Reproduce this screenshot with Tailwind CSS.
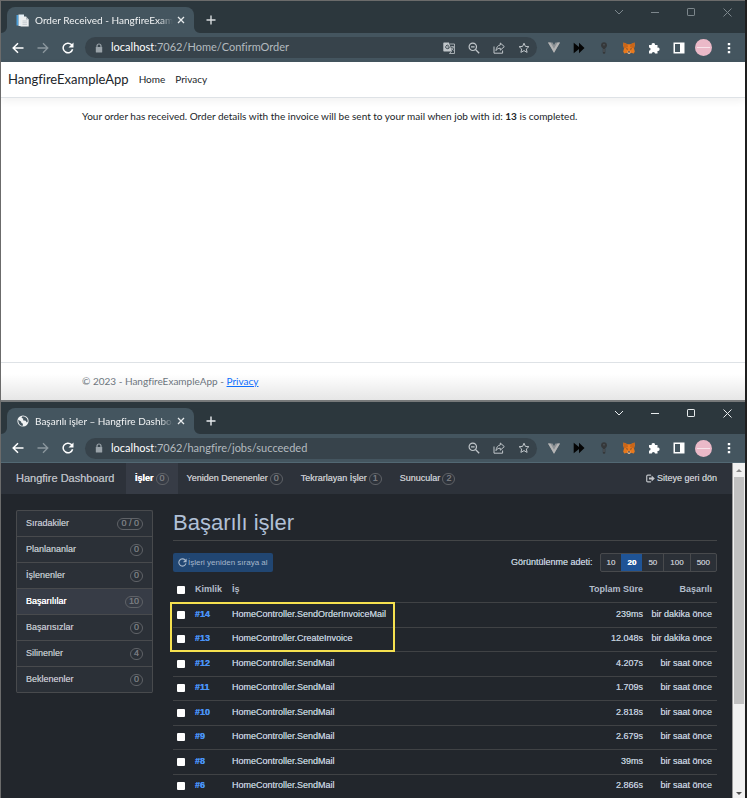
<!DOCTYPE html>
<html lang="tr">
<head>
<meta charset="utf-8">
<meta name="viewport" content="width=device-width, initial-scale=1">
<title>Hangfire Example</title>
<script src="https://cdn.jsdelivr.net/npm/@tailwindcss/browser@4"></script>
</head>
<body class="bg-[#1f1f1f]">

<svg class="hidden" aria-hidden="true">
  <symbol id="i-back" viewBox="0 0 12 12"><path d="M11.5 6H1.2M6 1.2 1.2 6 6 10.8" fill="none" stroke="currentColor" stroke-width="1.5"/></symbol>
  <symbol id="i-forward" viewBox="0 0 12 12"><path d="M.5 6h10.3M6 1.2 10.8 6 6 10.8" fill="none" stroke="currentColor" stroke-width="1.3"/></symbol>
  <symbol id="i-reload" viewBox="0 0 12 12"><path d="M10.6 7.2A4.8 4.8 0 1 1 9.4 2.6L10.6 4" fill="none" stroke="currentColor" stroke-width="1.5"/><path d="M11.5.5v5h-5z" fill="currentColor"/></symbol>
  <symbol id="i-lock" viewBox="0 0 8 10"><path d="M2 4.5V3a2 2 0 0 1 4 0v1.500" fill="none" stroke="currentColor" stroke-width="1.200"/><rect x=".8" y="4" width="6.400" height="5.500" rx=".6" fill="currentColor"/></symbol>
  <symbol id="i-translate" viewBox="0 0 12 12"><path d="M1 .5h5l3 9H1a.7.7 0 0 1-.7-.7V1.200A.7.7 0 0 1 1 .5z" fill="currentColor"/><path d="M6.300 4.800A1.800 1.800 0 1 1 5.600 3.500M4.500 4.900h1.800" fill="none" stroke="#37434b" stroke-width=".9"/><path d="M7 2h4.500v9.500H6.500L8.300 9.500M7.800 4.800h3.200M9.300 4v.8M10.500 4.800Q10 7 8.300 8.300M8.400 6q.7 1.600 2.300 2.400" fill="none" stroke="currentColor" stroke-width=".8"/></symbol>
  <symbol id="i-zoom" viewBox="0 0 12 12"><circle cx="4.800" cy="4.800" r="3.700" fill="none" stroke="currentColor" stroke-width="1.200"/><path d="M3 4.800h3.600M7.500 7.500l3.700 3.700" stroke="currentColor" stroke-width="1.300"/></symbol>
  <symbol id="i-share" viewBox="0 0 12 12"><path d="M1 4.500v6.700h8.600V8.500M7.300 1l4 3.600-4 3.600V6.200C5.200 6.200 4 7 3 8.600 3.300 5.500 4.800 3.300 7.300 3z" fill="none" stroke="currentColor" stroke-width="1"/></symbol>
  <symbol id="i-star" viewBox="0 0 12 12"><path d="M6 1.200l1.400 3.200 3.500.3-2.600 2.300.8 3.400L6 8.600l-3.100 1.800.8-3.400L1.100 4.700l3.500-.3z" fill="none" stroke="currentColor" stroke-width="1"/></symbol>
  <symbol id="i-vue" viewBox="0 0 12 11"><path d="M0 .5h4.500L6 3 7.500.5H12L6 10.800z" fill="#8d9296"/><path d="M0 .5h2.400L6 6.700 9.600.5H12L6 10.800z" fill="#b5b5b5"/></symbol>
  <symbol id="i-ff" viewBox="0 0 12 12"><path d="M.7.8 6 5v-4.200L11.500 6 6 11.200V7L.7 11.200z" fill="#050505"/></symbol>
  <symbol id="i-key" viewBox="0 0 8 12"><circle cx="4" cy="3.200" r="2.900" fill="#35383a"/><rect x="2.800" y="5.500" width="2.500" height="6.300" rx="1" fill="#35383a"/><path d="M4 2v1.500M4 7v3" stroke="#606b72" stroke-width=".8"/></symbol>
  <symbol id="i-fox" viewBox="0 0 12 12"><path d="M.5.5 4.500 2.300h3L11.500.5 11.800 3.500 11 6.500l.8 3-1 2-3-.7-.8.900H5l-.8-.9-3 .7-1-2 .8-3L.2 3.500z" fill="#e8791d"/><path d="M.5.5l4 1.800L5 5 1 6.500zM11.500.5l-4 1.800L7 5l4 1.500z" fill="#c96518"/><path d="M3 6.500l1.800.3-.6.900zM9 6.500l-1.800.3.6.9z" fill="#25313b"/><path d="M4.400 9.500h3.200L7 11.700H5z" fill="#d5c3b2"/><path d="M5 9.500h2l-.3 1H5.300z" fill="#20242a"/></symbol>
  <symbol id="i-puzzle" viewBox="0 0 12 12"><path d="M1 3h2.700a1.700 1.700 0 1 1 3.300 0H9.500v2.700a1.700 1.700 0 1 1 0 3.300v2.500H7a1.600 1.600 0 0 0-3.200 0H1V8.700a1.600 1.600 0 0 0 0-3.200z" fill="#fff"/></symbol>
  <symbol id="i-panel" viewBox="0 0 12 12"><path d="M.5.500h11v11H.5zM2 2v8h5V2z" fill="#fff" fill-rule="evenodd"/></symbol>
  <symbol id="i-dots" viewBox="0 0 4 12"><path d="M.8 1h2.400v2.200H.8zM.8 5h2.400v2.200H.8zM.8 9h2.400v2.200H.8z" fill="#fff"/></symbol>
  <symbol id="i-x" viewBox="0 0 8 8"><path d="M1 1l6 6M7 1 1 7" stroke="currentColor" stroke-width="1.300"/></symbol>
  <symbol id="i-plus" viewBox="0 0 10 10"><path d="M5 .5v9M.5 5h9" stroke="currentColor" stroke-width="1.400"/></symbol>
  <symbol id="i-chevron" viewBox="0 0 10 10"><path d="M1 3l4 4 4-4" fill="none" stroke="currentColor"/></symbol>
  <symbol id="i-min" viewBox="0 0 8 8"><path d="M0 4.500h8" stroke="currentColor"/></symbol>
  <symbol id="i-max" viewBox="0 0 8 8"><rect x=".5" y=".5" width="7" height="7" rx=".6" fill="none" stroke="currentColor"/></symbol>
  <symbol id="i-close" viewBox="0 0 9 9"><path d="M.5.5l8 8M8.500.5l-8 8" stroke="currentColor"/></symbol>
  <symbol id="i-foot" viewBox="0 0 6 6"><path d="M0 0a6 6 0 0 0 6 6H0z" fill="#44555f"/></symbol>
  <symbol id="i-page" viewBox="0 0 13 13"><path d="M.5 1h2v10.500h-2z" fill="#4a9fdb"/><path d="M2.500.5h5.500v11.500h-5.500z" fill="#e3eef5"/><path d="M4.500 2.500h5.500l2.700 3V12.500H4.500z" fill="#eceeef"/><path d="M10 2.500v3h2.700z" fill="#aab4ba"/><path d="M6.500 7h4.500M6.500 8.700h4.500M6.500 10.400h4.500" stroke="#b8c0c5" stroke-width=".7"/></symbol>
  <symbol id="i-globe" viewBox="0 0 12 12"><circle cx="6" cy="6" r="5.600" fill="#f1f3f4"/><path d="M1.200 4.800 4 6.500l.5 1.500 1.500.8-.4 2.200C3 10.700 1.200 8.700 1.200 4.800zM5.500 1.200 4.500 2.800l1.800 1L6 5.200l2.700.5 1 1.800 1-.8C11 4 9.300 1.500 5.500 1.200z" fill="#44555f"/></symbol>
  <symbol id="i-exit" viewBox="0 0 10 10"><path d="M5.500 1.200H2A1.200 1.200 0 0 0 .8 2.400v5.200A1.200 1.200 0 0 0 2 8.800h3.500" fill="none" stroke="currentColor" stroke-width="1.300"/><path d="M3.300 3.800h3V1.800L9.800 5 6.300 8.200v-2h-3z" fill="currentColor"/></symbol>
</svg>

<div class="grid h-screen grid-rows-[400fr_398fr] overflow-hidden border-l border-[#6b6b6b] pr-[2px]">

  <!-- Order confirmation window -->
  <section class="flex min-h-0 flex-col border-t border-[#6b6b6b] bg-white font-[Lato,sans-serif]">
    <div class="flex h-8 shrink-0 items-end bg-[#2c373d] pl-[6px] text-[#7d878d]">
      <div class="relative flex h-[26px] w-[187px] items-center rounded-t-lg bg-[#44555f] pr-[9px] pl-[9px]">
        <svg class="size-[13px] shrink-0"><use href="#i-page"/></svg>
        <span class="ml-[6px] flex-1 overflow-hidden mask-r-from-90% text-[10px] whitespace-nowrap text-[#f1f3f4]">Order Received - HangfireExampleApp</span>
        <button aria-label="Sekmeyi kapat" class="ml-1 text-[#e8ecee]"><svg class="size-2"><use href="#i-x"/></svg></button>
        <svg class="absolute bottom-0 left-full size-[6px]"><use href="#i-foot"/></svg>
        <svg class="absolute right-full bottom-0 size-[6px] -scale-x-100"><use href="#i-foot"/></svg>
      </div>
      <button aria-label="Yeni sekme" class="mb-2 ml-3 text-[#d8dcde]"><svg class="size-[10px]"><use href="#i-plus"/></svg></button>
      <div class="ml-auto flex self-start">
        <button aria-label="Sekme ara" class="flex h-[22px] w-9 items-center justify-center"><svg class="size-[10px]"><use href="#i-chevron"/></svg></button>
        <button aria-label="Küçült" class="flex h-[22px] w-9 items-center justify-center"><svg class="size-2"><use href="#i-min"/></svg></button>
        <button aria-label="Ekranı kapla" class="flex h-[22px] w-9 items-center justify-center"><svg class="size-2"><use href="#i-max"/></svg></button>
        <button aria-label="Kapat" class="flex h-[22px] w-9 items-center justify-center"><svg class="size-[9px]"><use href="#i-close"/></svg></button>
      </div>
    </div>
    <div class="flex h-[29px] shrink-0 items-center bg-[#44555f] px-1 text-white">
      <button aria-label="Geri" class="flex w-[25px] justify-center"><svg class="size-3"><use href="#i-back"/></svg></button>
      <button aria-label="İleri" class="flex w-[25px] justify-center text-[#8b979e]"><svg class="size-3"><use href="#i-forward"/></svg></button>
      <button aria-label="Yenile" class="flex w-[25px] justify-center"><svg class="size-3"><use href="#i-reload"/></svg></button>
      <div class="mr-1 ml-[5px] flex h-[21px] flex-1 items-center rounded-full bg-[#37434b] pl-[10px] text-[#c0c6ca]">
        <svg class="h-[10px] w-2 text-[#9aa3a9]"><use href="#i-lock"/></svg>
        <span class="ml-2 flex-1 text-[11px] text-[#b3babf]"><span class="text-white">localhost</span>:7062/Home/ConfirmOrder</span>
        <button aria-label="Çevir" class="flex w-[25px] justify-center"><svg class="size-3"><use href="#i-translate"/></svg></button>
        <button aria-label="Yakınlaştırma" class="flex w-[25px] justify-center"><svg class="size-3"><use href="#i-zoom"/></svg></button>
        <button aria-label="Paylaş" class="flex w-[25px] justify-center"><svg class="size-3"><use href="#i-share"/></svg></button>
        <button aria-label="Yer işareti" class="mr-px flex w-[25px] justify-center"><svg class="size-3"><use href="#i-star"/></svg></button>
      </div>
      <button aria-label="Vue" class="flex w-[25px] justify-center"><svg class="h-[11px] w-3"><use href="#i-vue"/></svg></button>
      <button aria-label="İleri sar" class="flex w-[25px] justify-center"><svg class="size-3"><use href="#i-ff"/></svg></button>
      <button aria-label="Anahtar" class="flex w-[25px] justify-center"><svg class="h-3 w-2"><use href="#i-key"/></svg></button>
      <button aria-label="Cüzdan" class="flex w-[25px] justify-center"><svg class="size-3"><use href="#i-fox"/></svg></button>
      <button aria-label="Uzantılar" class="flex w-[25px] justify-center"><svg class="size-3"><use href="#i-puzzle"/></svg></button>
      <button aria-label="Yan panel" class="flex w-[25px] justify-center"><svg class="size-3"><use href="#i-panel"/></svg></button>
      <button aria-label="Profil" class="flex w-[25px] justify-center"><span class="flex size-[17px] items-center justify-center rounded-full bg-[#ebb9c8]"><span class="h-px w-[13px] bg-[#f8e3ea]"></span></span></button>
      <button aria-label="Menü" class="flex w-[25px] justify-center"><svg class="h-3 w-1"><use href="#i-dots"/></svg></button>
    </div>
    <header class="flex h-9 shrink-0 items-center border-b border-[#dee2e6] pl-[7px] text-[10px] text-[#212529] shadow-[0_3px_8px_rgba(0,0,0,0.06)]">
      <a href="#" class="text-[13px]">HangfireExampleApp</a>
      <nav class="ml-[10px] flex gap-[10px]"><a href="#">Home</a><a href="#">Privacy</a></nav>
    </header>
    <main class="flex-1 px-[81px] pt-[10px] text-[10px] leading-4 text-[#212529]">
      <p>Your order has received. Order details with the invoice will be sent to your mail when job with id: <b>13</b> is completed.</p>
    </main>
    <footer class="flex h-[38px] shrink-0 items-center border-t border-[#dee2e6] bg-linear-to-b from-white from-30% to-[#e6e6e6] px-[81px] text-[10px] text-[#6c757d]">
      <span>© 2023 - HangfireExampleApp - <a href="#" class="text-[#0d6efd] underline">Privacy</a></span>
    </footer>
  </section>

  <!-- Hangfire dashboard window -->
  <section class="flex min-h-0 flex-col border-t-2 border-[#77797a] bg-[#22262c] font-['Liberation_Sans',Arial,sans-serif]">
    <div class="flex h-8 shrink-0 items-end bg-[#2c373d] pl-[6px] font-[Lato,sans-serif] text-[#e8ecee]">
      <div class="relative flex h-[26px] w-[187px] items-center rounded-t-lg bg-[#44555f] pr-[9px] pl-[10px]">
        <svg class="size-3 shrink-0"><use href="#i-globe"/></svg>
        <span class="ml-[6px] flex-1 overflow-hidden mask-r-from-90% text-[10px] whitespace-nowrap text-[#f1f3f4]">Başarılı işler – Hangfire Dashboard</span>
        <button aria-label="Sekmeyi kapat" class="ml-1"><svg class="size-2"><use href="#i-x"/></svg></button>
        <svg class="absolute bottom-0 left-full size-[6px]"><use href="#i-foot"/></svg>
        <svg class="absolute right-full bottom-0 size-[6px] -scale-x-100"><use href="#i-foot"/></svg>
      </div>
      <button aria-label="Yeni sekme" class="mb-2 ml-3"><svg class="size-[10px]"><use href="#i-plus"/></svg></button>
      <div class="ml-auto flex self-start">
        <button aria-label="Sekme ara" class="flex h-[22px] w-9 items-center justify-center"><svg class="size-[10px]"><use href="#i-chevron"/></svg></button>
        <button aria-label="Küçült" class="flex h-[22px] w-9 items-center justify-center"><svg class="size-2"><use href="#i-min"/></svg></button>
        <button aria-label="Ekranı kapla" class="flex h-[22px] w-9 items-center justify-center"><svg class="size-2"><use href="#i-max"/></svg></button>
        <button aria-label="Kapat" class="flex h-[22px] w-9 items-center justify-center"><svg class="size-[9px]"><use href="#i-close"/></svg></button>
      </div>
    </div>
    <div class="flex h-[29px] shrink-0 items-center border-b border-[#526873] bg-[#44555f] px-1 font-[Lato,sans-serif] text-white">
      <button aria-label="Geri" class="flex w-[25px] justify-center"><svg class="size-3"><use href="#i-back"/></svg></button>
      <button aria-label="İleri" class="flex w-[25px] justify-center text-[#8b979e]"><svg class="size-3"><use href="#i-forward"/></svg></button>
      <button aria-label="Yenile" class="flex w-[25px] justify-center"><svg class="size-3"><use href="#i-reload"/></svg></button>
      <div class="mr-1 ml-[5px] flex h-[21px] flex-1 items-center rounded-full bg-[#37434b] pl-[10px] text-[#c0c6ca]">
        <svg class="h-[10px] w-2 text-[#9aa3a9]"><use href="#i-lock"/></svg>
        <span class="ml-2 flex-1 text-[11px] text-[#b3babf]"><span class="text-white">localhost</span>:7062/hangfire/jobs/succeeded</span>
        <button aria-label="Yakınlaştırma" class="flex w-[25px] justify-center"><svg class="size-3"><use href="#i-zoom"/></svg></button>
        <button aria-label="Paylaş" class="flex w-[25px] justify-center"><svg class="size-3"><use href="#i-share"/></svg></button>
        <button aria-label="Yer işareti" class="mr-px flex w-[25px] justify-center"><svg class="size-3"><use href="#i-star"/></svg></button>
      </div>
      <button aria-label="Vue" class="flex w-[25px] justify-center"><svg class="h-[11px] w-3"><use href="#i-vue"/></svg></button>
      <button aria-label="İleri sar" class="flex w-[25px] justify-center"><svg class="size-3"><use href="#i-ff"/></svg></button>
      <button aria-label="Anahtar" class="flex w-[25px] justify-center"><svg class="h-3 w-2"><use href="#i-key"/></svg></button>
      <button aria-label="Cüzdan" class="flex w-[25px] justify-center"><svg class="size-3"><use href="#i-fox"/></svg></button>
      <button aria-label="Uzantılar" class="flex w-[25px] justify-center"><svg class="size-3"><use href="#i-puzzle"/></svg></button>
      <button aria-label="Yan panel" class="flex w-[25px] justify-center"><svg class="size-3"><use href="#i-panel"/></svg></button>
      <button aria-label="Profil" class="flex w-[25px] justify-center"><span class="flex size-[17px] items-center justify-center rounded-full bg-[#ebb9c8]"><span class="h-px w-[13px] bg-[#f8e3ea]"></span></span></button>
      <button aria-label="Menü" class="flex w-[25px] justify-center"><svg class="h-3 w-1"><use href="#i-dots"/></svg></button>
    </div>

    <div class="flex min-h-0 flex-1">
      <div class="min-w-0 flex-1 overflow-hidden text-[9px] text-[#bcc6d4] [text-shadow:0_0_0_currentColor]">
        <nav class="flex h-[31px] items-center bg-[#2d323a] pr-[15px] text-[#c0c3c8]">
          <a href="#" class="w-[125px] pl-[15px] text-[11px] whitespace-nowrap text-[#b4b8be]">Hangfire Dashboard</a>
          <a href="#" class="flex h-full items-center gap-[2px] bg-[#373c46] px-[9px] font-bold text-white">İşler <span class="flex h-3 min-w-[13px] items-center justify-center rounded-full border border-[#5f6267] px-[3px] font-normal text-[#777a7f]">0</span></a>
          <a href="#" class="flex h-full items-center gap-[2px] px-[9px]">Yeniden Denenenler <span class="flex h-3 min-w-[13px] items-center justify-center rounded-full border border-[#5f6267] px-[3px] text-[#777a7f]">0</span></a>
          <a href="#" class="flex h-full items-center gap-[2px] px-[9px]">Tekrarlayan İşler <span class="flex h-3 min-w-[13px] items-center justify-center rounded-full border border-[#5f6267] px-[3px] text-[#777a7f]">1</span></a>
          <a href="#" class="flex h-full items-center gap-[2px] px-[9px]">Sunucular <span class="flex h-3 min-w-[13px] items-center justify-center rounded-full border border-[#5f6267] px-[3px] text-[#777a7f]">2</span></a>
          <a href="#" class="ml-auto flex items-center gap-[2px]"><svg class="size-[9px]"><use href="#i-exit"/></svg>Siteye geri dön</a>
        </nav>
        <div class="flex gap-5 px-[15px] pt-4">
          <aside class="w-[137px] shrink-0 self-start rounded-xs border border-b-0 border-[#484a4d] bg-[#2b3037] text-[#babec4]">
            <a href="#" class="flex h-[26px] items-center justify-between border-b border-[#484a4d] px-[9px]">Sıradakiler <span class="flex h-3 items-center rounded-full border border-[#5f6267] px-[3px] text-[#777a7f]">0 / 0</span></a>
            <a href="#" class="flex h-[26px] items-center justify-between border-b border-[#484a4d] px-[9px]">Planlananlar <span class="flex h-3 min-w-[13px] items-center justify-center rounded-full border border-[#5f6267] px-[3px] text-[#777a7f]">0</span></a>
            <a href="#" class="flex h-[26px] items-center justify-between border-b border-[#484a4d] px-[9px]">İşlenenler <span class="flex h-3 min-w-[13px] items-center justify-center rounded-full border border-[#5f6267] px-[3px] text-[#777a7f]">0</span></a>
            <a href="#" class="flex h-[26px] items-center justify-between border-b border-[#484a4d] bg-[#373c46] px-[9px] text-white">Başarılılar <span class="flex h-3 min-w-[13px] items-center justify-center rounded-full border border-[#5f6267] px-[3px] text-[#777a7f]">10</span></a>
            <a href="#" class="flex h-[26px] items-center justify-between border-b border-[#484a4d] px-[9px]">Başarısızlar <span class="flex h-3 min-w-[13px] items-center justify-center rounded-full border border-[#5f6267] px-[3px] text-[#777a7f]">0</span></a>
            <a href="#" class="flex h-[26px] items-center justify-between border-b border-[#484a4d] px-[9px]">Silinenler <span class="flex h-3 min-w-[13px] items-center justify-center rounded-full border border-[#5f6267] px-[3px] text-[#777a7f]">4</span></a>
            <a href="#" class="flex h-[26px] items-center justify-between border-b border-[#484a4d] px-[9px]">Beklenenler <span class="flex h-3 min-w-[13px] items-center justify-center rounded-full border border-[#5f6267] px-[3px] text-[#777a7f]">0</span></a>
          </aside>
          <div class="min-w-0 flex-1">
            <h1 class="h-[31px] border-b border-[#434547] text-[22px] leading-[26px] text-[#b1c0d6] [text-shadow:none]">Başarılı işler</h1>
            <div class="mt-3 flex h-[19px] items-center">
              <button class="flex h-[19px] items-center gap-px rounded-xs bg-[#214672] px-[5px] text-[8px] whitespace-nowrap text-[#a6b6ca]"><svg class="size-[9px]"><use href="#i-reload"/></svg>İşleri yeniden sıraya al</button>
              <span class="mr-[7px] ml-auto">Görüntülenme adeti:</span>
              <div class="flex h-[19px] rounded-xs border border-[#484a4d] bg-[#2b3037] text-[8px] text-[#babec4]">
                <a href="#" class="flex items-center px-[6px]">10</a>
                <a href="#" class="flex items-center bg-[#1f5496] px-[6px] font-bold text-white">20</a>
                <a href="#" class="flex items-center px-[6px]">50</a>
                <a href="#" class="flex items-center border-l border-[#484a4d] px-[6px]">100</a>
                <a href="#" class="flex items-center border-l border-[#484a4d] px-[6px]">500</a>
              </div>
            </div>
            <div class="relative mt-[6px]">
              <table class="w-full table-fixed border-collapse text-left whitespace-nowrap [&_td]:p-0 [&_th]:p-0 [&_tr]:border-b [&_tr]:border-[#404245] [&_input]:block [&_input]:size-2 [&_input]:appearance-none [&_input]:rounded-[1px] [&_input]:bg-white">
                <colgroup><col class="w-[22px]"><col class="w-[37px]"><col><col class="w-[90px]"><col class="w-[74px]"></colgroup>
                <thead class="text-[#b3bdcb] [text-shadow:none]">
                  <tr class="h-6"><th class="pl-1!"><input type="checkbox" aria-label="Tümünü seç"></th><th>Kimlik</th><th>İş</th><th class="text-right">Toplam Süre</th><th class="pr-[5px]! text-right">Başarılı</th></tr>
                </thead>
                <tbody class="[&_a]:font-bold [&_a]:text-[#4a94f7] [&_tr]:h-[25px] [&_tr:nth-child(even)]:h-6">
                  <tr><td class="pl-1!"><input type="checkbox" aria-label="#14"></td><td><a href="#">#14</a></td><td>HomeController.SendOrderInvoiceMail</td><td class="text-right">239ms</td><td class="pr-[5px]! text-right">bir dakika önce</td></tr>
                  <tr><td class="pl-1!"><input type="checkbox" aria-label="#13"></td><td><a href="#">#13</a></td><td>HomeController.CreateInvoice</td><td class="text-right">12.048s</td><td class="pr-[5px]! text-right">bir dakika önce</td></tr>
                  <tr><td class="pl-1!"><input type="checkbox" aria-label="#12"></td><td><a href="#">#12</a></td><td>HomeController.SendMail</td><td class="text-right">4.207s</td><td class="pr-[5px]! text-right">bir saat önce</td></tr>
                  <tr><td class="pl-1!"><input type="checkbox" aria-label="#11"></td><td><a href="#">#11</a></td><td>HomeController.SendMail</td><td class="text-right">1.709s</td><td class="pr-[5px]! text-right">bir saat önce</td></tr>
                  <tr><td class="pl-1!"><input type="checkbox" aria-label="#10"></td><td><a href="#">#10</a></td><td>HomeController.SendMail</td><td class="text-right">2.818s</td><td class="pr-[5px]! text-right">bir saat önce</td></tr>
                  <tr><td class="pl-1!"><input type="checkbox" aria-label="#9"></td><td><a href="#">#9</a></td><td>HomeController.SendMail</td><td class="text-right">2.679s</td><td class="pr-[5px]! text-right">bir saat önce</td></tr>
                  <tr><td class="pl-1!"><input type="checkbox" aria-label="#8"></td><td><a href="#">#8</a></td><td>HomeController.SendMail</td><td class="text-right">39ms</td><td class="pr-[5px]! text-right">bir saat önce</td></tr>
                  <tr><td class="pl-1!"><input type="checkbox" aria-label="#6"></td><td><a href="#">#6</a></td><td>HomeController.SendMail</td><td class="text-right">2.866s</td><td class="pr-[5px]! text-right">bir saat önce</td></tr>
                </tbody>
              </table>
              <div class="pointer-events-none absolute top-6 -left-[3px] h-[50px] w-[225px] border-2 border-[#f5e04f]"></div>
            </div>
          </div>
        </div>
      </div>
      <div class="flex w-[13px] shrink-0 flex-col items-center border-l border-[#9a9a9a] bg-[#f1f1f1]" aria-hidden="true">
        <svg class="h-[14px] w-2 shrink-0" viewBox="0 0 8 14"><path d="M1 9l3-3 3 3z" fill="#8a8a8a"/></svg>
        <div class="w-[10px] flex-[226] bg-[#c1c1c1]"></div>
        <div class="flex-[86]"></div>
        <svg class="h-2 w-2 shrink-0" viewBox="0 0 8 8"><path d="M1 2h6L4 5z" fill="#505050"/></svg>
      </div>
    </div>
  </section>
</div>
</body>
</html>
